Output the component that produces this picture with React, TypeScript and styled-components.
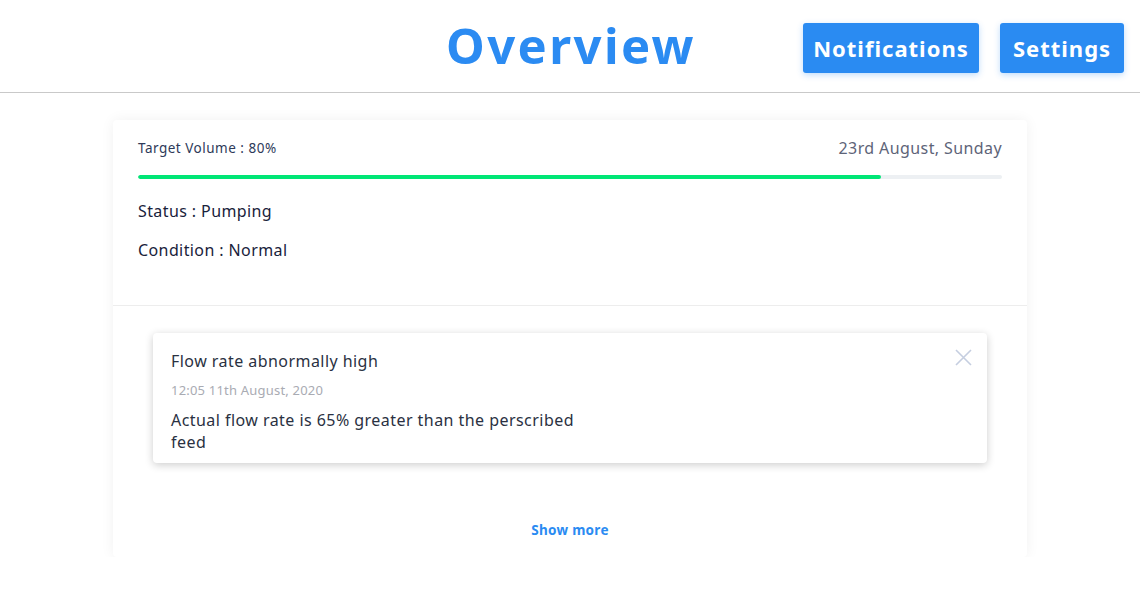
import React from "react";
import styled, { createGlobalStyle } from "styled-components";

const Global = createGlobalStyle`
  html, body { margin: 0; padding: 0; background: #ffffff; }
  body { font-family: "Noto Sans", "Open Sans", sans-serif; color: #1f2a44; }
  * { box-sizing: border-box; }
`;

const Header = styled.header`
  display: grid;
  grid-template-columns: 1fr auto 1fr;
  align-items: center;
  height: 93px;
  border-bottom: 1px solid #c9c9c9;
`;

const Title = styled.h1`
  grid-column: 2;
  margin: 0 0 0 2px;
  font-family: "Noto Sans", sans-serif;
  font-weight: 700;
  font-size: 49px;
  letter-spacing: 2.4px;
  color: #2b8bf2;
  line-height: 1;
  padding-bottom: 2px;
`;

const Actions = styled.div`
  grid-column: 3;
  justify-self: end;
  display: flex;
  gap: 21px;
  align-self: start;
  margin: 23px 16px 0 0;
`;

const NavButton = styled.button<{ $w: number }>`
  height: 50px;
  padding: 0;
  width: ${(p) => p.$w}px;
  border: none;
  border-radius: 3px;
  background: #2a8bf2;
  color: #ffffff;
  font-family: "Noto Sans", sans-serif;
  font-weight: 700;
  font-size: 22px;
  letter-spacing: 1px;
  box-shadow: 0 2px 6px rgba(42, 139, 242, 0.3);
  cursor: pointer;
`;

const Card = styled.section`
  width: 914px;
  margin: 27px auto 0;
  background: #fff;
  border-radius: 4px;
  box-shadow: 0 0 14px rgba(0, 0, 0, 0.06);
`;

const Top = styled.div`
  padding: 17px 25px 44px;
  border-bottom: 1px solid #ededed;
`;

const Row = styled.div`
  display: flex;
  justify-content: space-between;
  align-items: center;
  height: 22px;
`;

const Small = styled.span`
  font-size: 13.5px;
  letter-spacing: 0.5px;
  color: #2e3a59;
`;

const DateText = styled.span`
  font-size: 16px;
  letter-spacing: 0.4px;
  color: #5e6478;
`;

const Track = styled.div`
  margin-top: 16px;
  height: 4px;
  border-radius: 2px;
  background: #edf0f3;
  overflow: hidden;
`;

const Fill = styled.div`
  height: 100%;
  background: #00e676;
  border-radius: 2px;
`;

const Line = styled.div<{ $mt: number }>`
  margin-top: ${(p) => p.$mt}px;
  font-size: 16px;
  letter-spacing: 0.4px;
  line-height: 22px;
  color: #19223b;
`;

const Bottom = styled.div`
  padding: 27px 40px 17px;
  display: flex;
  flex-direction: column;
`;

const Notice = styled.div`
  position: relative;
  padding: 17px 18px 10px;
  border-radius: 4px;
  background: #fff;
  box-shadow: 0 2px 8px rgba(0, 0, 0, 0.2);
`;

const NoticeTitle = styled.div`
  font-size: 16px;
  letter-spacing: 0.45px;
  line-height: 22px;
  color: #2a3142;
`;

const NoticeDate = styled.div`
  margin-top: 8px;
  font-size: 13px;
  letter-spacing: 0.2px;
  line-height: 20px;
  color: #a9abb3;
`;

const NoticeBody = styled.div`
  margin-top: 9px;
  max-width: 420px;
  font-size: 16px;
  letter-spacing: 0.45px;
  line-height: 22px;
  color: #2a3142;
`;

const Close = styled.button`
  position: absolute;
  top: 14px;
  right: 14px;
  width: 20px;
  height: 20px;
  padding: 0;
  border: none;
  background: transparent;
  cursor: pointer;
  display: flex;
  align-items: center;
  justify-content: center;
`;

const ShowMore = styled.button`
  align-self: center;
  margin-top: 57px;
  border: none;
  background: transparent;
  font-family: "Noto Sans", sans-serif;
  font-weight: 700;
  font-size: 13.5px;
  letter-spacing: 0.3px;
  line-height: 20px;
  color: #2a8bf2;
  cursor: pointer;
  padding: 0;
`;

export default function App() {
  const progress = 86;
  return (
    <>
      <Global />
      <Header>
        <Title>Overview</Title>
        <Actions>
          <NavButton $w={176}>Notifications</NavButton>
          <NavButton $w={124}>Settings</NavButton>
        </Actions>
      </Header>
      <Card>
        <Top>
          <Row>
            <Small>Target Volume : 80%</Small>
            <DateText>23rd August, Sunday</DateText>
          </Row>
          <Track>
            <Fill style={{ width: `${progress}%` }} />
          </Track>
          <Line $mt={21}>Status : Pumping</Line>
          <Line $mt={17}>Condition : Normal</Line>
        </Top>
        <Bottom>
          <Notice>
            <NoticeTitle>Flow rate abnormally high</NoticeTitle>
            <NoticeDate>12:05 11th August, 2020</NoticeDate>
            <NoticeBody>
              Actual flow rate is 65% greater than the perscribed feed
            </NoticeBody>
            <Close aria-label="close">
              <svg width="17" height="17" viewBox="0 0 17 17">
                <path d="M1 1 L16 16 M16 1 L1 16" stroke="#c5cee0" strokeWidth="1.6" />
              </svg>
            </Close>
          </Notice>
          <ShowMore>Show more</ShowMore>
        </Bottom>
      </Card>
    </>
  );
}
